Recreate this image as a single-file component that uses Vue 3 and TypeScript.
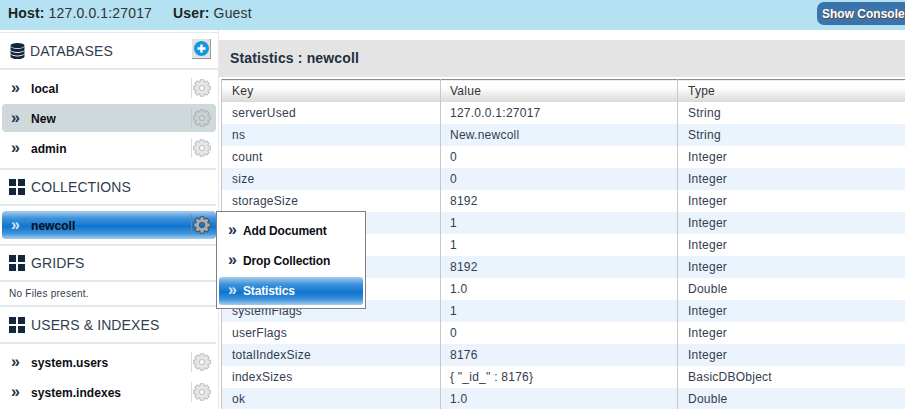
<template>
  <div class="page">
    <header class="topbar">
      <div class="info">
        <span><b>Host:</b> 127.0.0.1:27017</span>
        <span><b>User:</b> Guest</span>
      </div>
      <button class="console-btn">Show Console</button>
    </header>

    <div class="body">
      <aside class="sidebar">
        <section class="head head-first">
          <svg class="head-icon" width="15" height="16" viewBox="0 0 15 16">
            <ellipse cx="7.5" cy="2.6" rx="7" ry="2.6" fill="#14263c" />
            <path d="M.5 3.600c.8 1.500 3.700 2.400 7 2.400s6.200-.9 7-2.400v3c0 1.400-3.100 2.500-7 2.500s-7-1.100-7-2.500z" fill="#14263c" />
            <path d="M.5 7.500c.8 1.500 3.700 2.400 7 2.400s6.200-.9 7-2.400v2.600c0 1.400-3.100 2.500-7 2.500s-7-1.100-7-2.500z" fill="#14263c" />
            <path d="M.5 11c.8 1.500 3.700 2.400 7 2.400s6.200-.9 7-2.400v2.400c0 1.400-3.100 2.600-7 2.600s-7-1.200-7-2.600z" fill="#14263c" />
          </svg>
          <span>DATABASES</span>
          <span class="add-btn">
            <svg width="15" height="15" viewBox="0 0 15 15">
              <circle cx="7.5" cy="7.5" r="7.5" fill="#1496e2" />
              <path d="M7.500 3.500v8M3.500 7.500h8" stroke="#fff" stroke-width="2.400" />
            </svg>
          </span>
        </section>
        <div class="list list-db">
          <div v-for="db in databases" :key="db" class="nav-item" :class="{ selected: db === 'New' }">
            <span class="chev">»</span>
            <span class="label">{{ db }}</span>
            <span class="gear-wrap"><svg class="gear" viewBox="0 0 24 24"><path :d="gearPath" fill-rule="evenodd" /></svg></span>
          </div>
        </div>

        <section class="head">
          <span class="tiles"><i></i><i></i><i></i><i></i></span>
          <span>COLLECTIONS</span>
        </section>
        <div class="list list-coll">
          <div class="nav-item active">
            <span class="chev">»</span>
            <span class="label">newcoll</span>
            <span class="gear-wrap"><svg class="gear" viewBox="0 0 24 24"><path :d="gearPath" fill-rule="evenodd" /></svg></span>
          </div>
        </div>

        <section class="head">
          <span class="tiles"><i></i><i></i><i></i><i></i></span>
          <span>GRIDFS</span>
        </section>
        <div class="no-files">No Files present.</div>

        <section class="head">
          <span class="tiles"><i></i><i></i><i></i><i></i></span>
          <span>USERS &amp; INDEXES</span>
        </section>
        <div class="list">
          <div v-for="c in systemColls" :key="c" class="nav-item">
            <span class="chev">»</span>
            <span class="label">{{ c }}</span>
            <span class="gear-wrap"><svg class="gear" viewBox="0 0 24 24"><path :d="gearPath" fill-rule="evenodd" /></svg></span>
          </div>
        </div>
      </aside>

      <main class="content">
        <h2 class="title">Statistics : newcoll</h2>
        <table class="stats">
          <thead>
            <tr><th>Key</th><th>Value</th><th>Type</th></tr>
          </thead>
          <tbody>
            <tr v-for="row in rows" :key="row[0]">
              <td>{{ row[0] }}</td><td>{{ row[1] }}</td><td>{{ row[2] }}</td>
            </tr>
          </tbody>
        </table>
      </main>

      <div class="menu">
        <div class="menu-item"><span class="chev">»</span>Add Document</div>
        <div class="menu-item"><span class="chev">»</span>Drop Collection</div>
        <div class="menu-item active"><span class="chev">»</span>Statistics</div>
      </div>
    </div>
  </div>
</template>

<script setup lang="ts">
const databases = ['local', 'New', 'admin']
const systemColls = ['system.users', 'system.indexes']

const rows: [string, string, string][] = [
  ['serverUsed', '127.0.0.1:27017', 'String'],
  ['ns', 'New.newcoll', 'String'],
  ['count', '0', 'Integer'],
  ['size', '0', 'Integer'],
  ['storageSize', '8192', 'Integer'],
  ['numExtents', '1', 'Integer'],
  ['nindexes', '1', 'Integer'],
  ['lastExtentSize', '8192', 'Integer'],
  ['paddingFactor', '1.0', 'Double'],
  ['systemFlags', '1', 'Integer'],
  ['userFlags', '0', 'Integer'],
  ['totalIndexSize', '8176', 'Integer'],
  ['indexSizes', '{ "_id_" : 8176}', 'BasicDBObject'],
  ['ok', '1.0', 'Double'],
]

// eight tooth gear, built once and shared by every row
function buildGear(): string {
  const cx = 12
  const cy = 12
  const pts: string[] = []
  for (let i = 0; i < 8; i++) {
    const a = (i * Math.PI) / 4
    const steps: [number, number][] = [
      [-0.34, 8.6],
      [-0.2, 11.3],
      [0.2, 11.3],
      [0.34, 8.6],
    ]
    for (const [d, r] of steps) {
      pts.push(`${(cx + r * Math.cos(a + d)).toFixed(2)} ${(cy + r * Math.sin(a + d)).toFixed(2)}`)
    }
  }
  const hole = `M${cx + 3.4} ${cy}a3.4 3.4 0 1 0 -6.800 0a3.4 3.4 0 1 0 6.800 0z`
  return `M${pts.join('L')}z${hole}`
}

const gearPath = buildGear()
</script>

<style scoped>
.page {
  width: 905px;
  height: 409px;
  overflow: hidden;
  font-family: "Liberation Sans", Arial, sans-serif;
  color: #14263c;
  background: #fff;
}

.topbar {
  height: 30px;
  background: #b4e2f2;
  display: flex;
  align-items: center;
  justify-content: space-between;
  padding-left: 8px;
  box-sizing: border-box;
}

.info {
  display: flex;
  gap: 21px;
  font-size: 14px;
  letter-spacing: 0.15px;
  color: #333;
  margin-top: -4px;
}

.info b {
  color: #222;
}

.console-btn {
  width: 88px;
  height: 23px;
  margin-top: -3px;
  padding: 0 0 0 5px;
  border: 0;
  border-radius: 7px 0 0 7px;
  background: #3a74ab;
  color: #fff;
  font: bold 12px "Liberation Sans", Arial, sans-serif;
  text-shadow: 1px 1px 0 #5a4a3a;
  white-space: nowrap;
  text-align: left;
}

.body {
  position: relative;
  display: flex;
  height: 379px;
}

.sidebar {
  width: 218px;
  flex: none;
  border-right: 1px solid #e6e8ea;
  padding-top: 2px;
}

.head {
  height: 36px;
  display: flex;
  align-items: center;
  gap: 6px;
  padding-left: 9px;
  width: 216px;
  box-sizing: border-box;
  border-bottom: 2px solid #e6e9ec;
  font-size: 14px;
  letter-spacing: 0.1px;
  color: #333c50;
  position: relative;
}

.head-first {
  border-top: 1px solid #e6e9ec;
  height: 38px;
  width: 218px;
}

.head-icon {
  margin-left: 1px;
  margin-right: -1px;
}

.add-btn {
  position: absolute;
  left: 192px;
  top: 6px;
  width: 19px;
  height: 20px;
  display: flex;
  align-items: center;
  justify-content: center;
  background: #dfe3e6;
  border-right: 1px solid #9a9a9a;
  border-bottom: 1px solid #9a9a9a;
  box-sizing: border-box;
}

.tiles {
  width: 16px;
  height: 16px;
  display: grid;
  grid-template-columns: 7px 7px;
  grid-template-rows: 7px 7px;
  gap: 2px;
}

.tiles i {
  background: #14263c;
}

.list {
  padding: 4px 0 5px 2px;
  width: 216px;
  box-sizing: border-box;
  border-bottom: 2px solid #e6e9ec;
}

.list:last-child {
  border-bottom: 0;
}

.list-db {
  padding-bottom: 6px;
}

.list-coll {
  padding-top: 5px;
}

.nav-item {
  height: 28px;
  margin-bottom: 2px;
  display: flex;
  align-items: center;
  border-radius: 4px;
  font-size: 12px;
  letter-spacing: 0.05px;
  font-weight: bold;
  color: #0d0d14;
  padding-left: 9px;
  box-sizing: border-box;
}

.nav-item:last-child {
  margin-bottom: 0;
}

.chev {
  width: 20px;
  flex: none;
  font-size: 16px;
  font-weight: bold;
  color: #22344f;
  margin-top: -2px;
}

.nav-item .chev {
  margin-top: 0;
}

.label {
  flex: 1;
  margin-top: 2px;
}

.gear-wrap {
  width: 25px;
  height: 20px;
  border-left: 1px solid #d8dcdf;
  display: flex;
  align-items: center;
  padding-left: 1px;
  box-sizing: border-box;
  flex: none;
}

.gear {
  width: 18px;
  height: 18px;
  fill: #e6e7e8;
  stroke: #bfc2c4;
  stroke-width: 1.5;
}

.selected {
  background: #cfd8da;
}

.selected .gear {
  fill: #cbd0d1;
  stroke: #aeb4b6;
}

.selected .gear-wrap {
  border-left-color: #c2c9cc;
}

.active {
  background: linear-gradient(#a9cdec 0%, #3f94dc 25%, #0f74cf 55%, #3f94dc 80%, #a5cdee 100%);
}

.active .chev {
  color: #d8e6f2;
}

.active .gear {
  fill: #a3adb6;
  stroke: #49545e;
}

.active .gear-wrap {
  border-left-color: #5c88b2;
}

.no-files {
  height: 25px;
  line-height: 23px;
  margin-bottom: 1px;
  padding-left: 9px;
  width: 218px;
  box-sizing: border-box;
  font-size: 10px;
  letter-spacing: 0.25px;
  color: #333c50;
  border-bottom: 2px solid #e6e9ec;
}

.content {
  flex: 1;
  min-width: 0;
  padding-top: 10px;
}

.title {
  margin: 0 0 2px;
  height: 37px;
  line-height: 37px;
  padding-left: 11px;
  background: #e4e4e4;
  font-size: 14px;
  letter-spacing: 0.15px;
  font-weight: bold;
  color: #22303f;
}

.stats {
  width: 684px;
  margin-left: 2px;
  border-collapse: collapse;
  table-layout: fixed;
  font-size: 12px;
  letter-spacing: 0.25px;
  color: #333c50;
  border-left: 1px solid #c4c4c4;
  border-top: 1px solid #8c8c8c;
}

.stats th,
.stats td {
  height: 22px;
  padding: 0 0 0 10px;
  text-align: left;
  font-weight: normal;
  border-left: 1px solid #c8c8c8;
  box-sizing: border-box;
}

.stats th:nth-child(2),
.stats td:nth-child(2) {
  padding-left: 9px;
}

.stats th {
  background: linear-gradient(#fff 30%, #d9d9d9 100%);
  color: #333;
}

.stats th:nth-child(1) {
  width: 219px;
}

.stats th:nth-child(2) {
  width: 237px;
}

.stats tbody tr:nth-child(even) td {
  background: #ebf3fc;
}

.menu {
  position: absolute;
  left: 216px;
  top: 181px;
  width: 150px;
  height: 98px;
  box-sizing: border-box;
  padding: 5px 2px 0;
  background: #fff;
  border: 1px solid #808080;
}

.menu-item {
  height: 28px;
  margin-bottom: 2px;
  display: flex;
  align-items: center;
  padding-left: 9px;
  border-radius: 3px;
  font-size: 12px;
  letter-spacing: -0.15px;
  font-weight: bold;
  color: #0d0d14;
}

.menu-item .chev {
  width: 15px;
}

.menu-item.active {
  color: #fff;
}
</style>

<style>
html,
body {
  margin: 0;
  overflow: hidden;
}
</style>
